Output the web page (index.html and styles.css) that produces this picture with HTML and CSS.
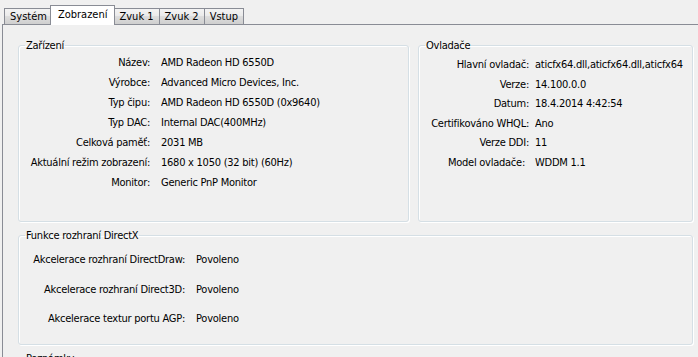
FILE: index.html
```html
<!DOCTYPE html>
<html lang="cs">
<head>
    <meta charset="UTF-8">
    <meta name="viewport" content="width=device-width, initial-scale=1.0">
    <title>Diagnostický nástroj DirectX - Zobrazení</title>
    <link rel="stylesheet" href="styles.css">
</head>
<body>
    <div class="tabs">
        <div class="tab">Systém</div>
        <div class="tab active">Zobrazení</div>
        <div class="tab">Zvuk 1</div>
        <div class="tab">Zvuk 2</div>
        <div class="tab">Vstup</div>
    </div>

    <div class="panel">
        <div class="top-row">
            <!-- Zařízení -->
            <fieldset class="group device">
                <legend>Zařízení</legend>
                <dl class="props">
                    <dt>Název:</dt><dd>AMD Radeon HD 6550D</dd>
                    <dt>Výrobce:</dt><dd>Advanced Micro Devices, Inc.</dd>
                    <dt>Typ čipu:</dt><dd>AMD Radeon HD 6550D (0x9640)</dd>
                    <dt>Typ DAC:</dt><dd>Internal DAC(400MHz)</dd>
                    <dt>Celková paměť:</dt><dd>2031 MB</dd>
                    <dt>Aktuální režim zobrazení:</dt><dd>1680 x 1050 (32 bit) (60Hz)</dd>
                    <dt>Monitor:</dt><dd>Generic PnP Monitor</dd>
                </dl>
            </fieldset>

            <!-- Ovladače -->
            <fieldset class="group drivers">
                <legend>Ovladače</legend>
                <dl class="props">
                    <dt>Hlavní ovladač:</dt><dd>aticfx64.dll,aticfx64.dll,aticfx64</dd>
                    <dt>Verze:</dt><dd>14.100.0.0</dd>
                    <dt>Datum:</dt><dd>18.4.2014 4:42:54</dd>
                    <dt>Certifikováno WHQL:</dt><dd>Ano</dd>
                    <dt>Verze DDI:</dt><dd>11</dd>
                    <dt class="short">Model ovladače:</dt><dd>WDDM 1.1</dd>
                </dl>
            </fieldset>
        </div>

        <!-- Funkce rozhraní DirectX -->
        <fieldset class="group directx">
            <legend>Funkce rozhraní DirectX</legend>
            <dl class="props">
                <dt>Akcelerace rozhraní DirectDraw:</dt><dd>Povoleno</dd>
                <dt>Akcelerace rozhraní Direct3D:</dt><dd>Povoleno</dd>
                <dt>Akcelerace textur portu AGP:</dt><dd>Povoleno</dd>
            </dl>
        </fieldset>

        <fieldset class="group notes">
            <legend>Poznámky</legend>
        </fieldset>
    </div>
</body>
</html>
```

FILE: styles.css
```css
body {
    margin: 0;
    background-color: #f0f0f0;
    font-family: "DejaVu Sans Condensed", "DejaVu Sans", sans-serif;
    font-stretch: condensed;
    font-size: 11px;
    color: #000;
    height: 357px;
    overflow: hidden;
}

.tabs {
    display: flex;
    align-items: flex-end;
    height: 24px;
    padding-left: 4px;
}

.tab {
    height: 15px;
    line-height: 15px;
    padding: 0 5px;
    border: 1px solid #898c95;
    border-bottom: none;
    margin-right: -1px;
    background: linear-gradient(#f3f3f3, #ebebeb 45%, #dddddd 50%, #cfcfcf);
}

.tab.active {
    position: relative;
    z-index: 1;
    height: 19px;
    line-height: 17px;
    margin: 0 -2px -1px -2px;
    padding: 0 7px;
    background: #fff;
}

.panel {
    display: flex;
    flex-direction: column;
    gap: 7px;
    margin-left: 2px;
    padding: 14px 5px 0 15px;
    border-top: 1px solid #898c95;
    border-left: 1px solid #898c95;
    letter-spacing: -0.25px;
}

.top-row {
    display: flex;
    gap: 9px;
}

.group {
    margin: 0;
    padding: 0;
    border: 1px solid #d5dfe5;
    border-radius: 3px;
    box-shadow: 1px 1px 0 #fff, inset 1px 1px 0 #fff;
    min-width: 0;
}

.group legend {
    margin-left: 6px;
    padding: 0 1px;
    line-height: 13px;
}

.device {
    width: 389px;
    flex: none;
    padding-bottom: 28px;
}

.drivers {
    flex: 1;
}

.props {
    display: grid;
    margin: 1px 0 0;
    line-height: 20px;
}

.props dt {
    text-align: right;
    white-space: nowrap;
}

.props dd {
    margin: 0;
    white-space: nowrap;
    overflow: hidden;
}

.device .props {
    grid-template-columns: 131px 1fr;
    column-gap: 11px;
}

.drivers .props {
    grid-template-columns: 110px 1fr;
    column-gap: 6px;
    line-height: 19.6px;
    margin-top: 3px;
}

.drivers .props dt.short {
    padding-right: 4px;
}

.directx .props {
    grid-template-columns: 166px 1fr;
    column-gap: 11px;
    line-height: 29.5px;
    margin-top: 3px;
    padding-bottom: 10px;
}

.notes {
    height: 60px;
}
```
